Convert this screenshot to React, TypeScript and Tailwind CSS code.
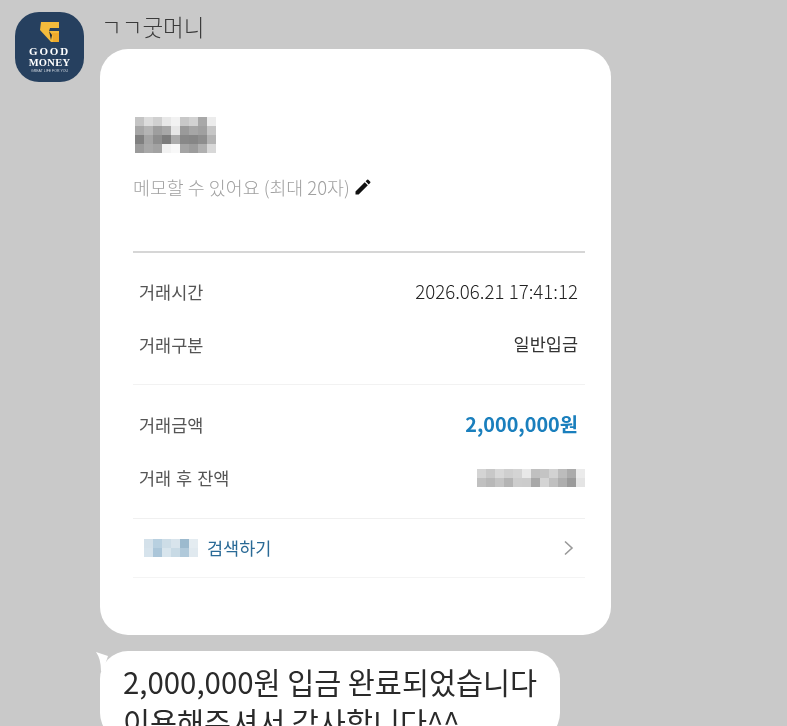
const font = "font-['Noto_Sans_CJK_KR','Noto_Sans',sans-serif]";

function Mosaic({ colors, cols }: { colors: string[]; cols: number }) {
  return (
    <div className="grid shrink-0" style={{ gridTemplateColumns: `repeat(${cols}, 9px)`, gridAutoRows: "9px" }}>
      {colors.map((c, i) => (
        <div key={i} style={{ backgroundColor: c }} />
      ))}
    </div>
  );
}

const nameMosaic = [
  "#c4c4c4", "#dcdcdc", "#d0d0d0", "#e8e8e8", "#f2f2f2", "#c8c8c8", "#d2d2d2", "#a8a8a8", "#ececec",
  "#a6a6a6", "#b4b4b4", "#9e9e9e", "#a8a8a8", "#e6e6e6", "#9a9a9a", "#a6a6a6", "#a0a0a0", "#c6c6c6",
  "#808080", "#a4a4a4", "#8e8e8e", "#7c7c7c", "#ababab", "#888888", "#868686", "#8e8e8e", "#b4b4b4",
  "#9a9a9a", "#a8a8a8", "#a2a2a2", "#f2f2f2", "#f8f8f8", "#a4a4a4", "#9c9c9c", "#b0b0b0", "#d8d8d8",
];
const balanceMosaic = [
  "#d4d4d4", "#c8c8c8", "#d8d8d8", "#cfcfcf", "#d4d4d4", "#e8e8e8", "#c0c0c0", "#c4c4c4", "#d2d2d2", "#bcbcbc", "#ababab", "#ebebeb",
  "#c0c0c0", "#b8b8b8", "#c4c4c4", "#b4b4b4", "#cdcdcd", "#cccccc", "#a8a8a8", "#d4d4d4", "#c0c0c0", "#aeaeae", "#9a9a9a", "#e4e4e4",
];
const linkMosaic = [
  "#d4e1ea", "#b8d0e0", "#cddde7", "#d8e4ec", "#9cbace", "#e4ecf1",
  "#d6e3ec", "#abc6d9", "#d8e5ed", "#c8dae5", "#b0c9da", "#e0e9ef",
];

function Row({ label, children, className }: { label: string; children: React.ReactNode; className: string }) {
  return (
    <div className={`flex h-[26px] items-center justify-between ${className}`}>
      <span className="pl-[6px] text-[17.5px] leading-[24px] text-[#555555] [word-spacing:1px]">{label}</span>
      {children}
    </div>
  );
}

function Logo() {
  return (
    <div className="flex h-[70px] w-[69px] shrink-0 flex-col items-center rounded-[24px] bg-[#26405f] pt-[10px]">
      <svg width="19" height="21" viewBox="0 0 19 21">
        <path d="M1 0H19V6H10L9 9H19V20H11L0 8Z" fill="#f4bb3c" />
        <path d="M11 11H19V20H13V14Z" fill="#eeaa2c" />
        <path d="M9 9L11 18L12 13Z" fill="#16263a" />
      </svg>
      <span className="mt-[3px] font-['Liberation_Serif',serif] text-[11px] font-bold leading-[11px] tracking-[1.8px] text-white">GOOD</span>
      <span className="font-['Liberation_Serif',serif] text-[10.5px] font-bold leading-[11px] tracking-[0.3px] text-white">MONEY</span>
      <span className="mt-[1px] font-['Liberation_Sans',sans-serif] text-[3.5px] leading-[4px] text-[#d5dbe3]">GREAT LIFE FOR YOU</span>
    </div>
  );
}

export default function App() {
  return (
    <div className={`${font} flex h-[726px] w-[787px] gap-[16px] overflow-hidden bg-[#c9c9c9] pl-[15px] pt-[12px] blur-[0.4px]`}>
      <Logo />
      <div className="flex w-[511px] shrink-0 flex-col">
        <div className="pl-[1px] text-[22.5px] font-light leading-[28px] text-[#3a3a3a]">ㄱㄱ굿머니</div>
        <div className="mt-[9px] flex h-[586px] shrink-0 flex-col rounded-[28px] bg-white pl-[33px] pr-[26px] pt-[68px]">
          <div className="pl-[2px]">
            <Mosaic colors={nameMosaic} cols={9} />
          </div>
          <div className="mt-[22px] flex items-center gap-[3px] text-[18.4px] font-light leading-[24px] text-[#a0a0a0]">
            <span>메모할 수 있어요 (최대 20자)</span>
            <svg width="20" height="20" viewBox="0 0 24 24" fill="#111111">
              <path d="M3 17.25V21h3.75L17.81 9.94l-3.75-3.75L3 17.25zM20.71 7.04a1 1 0 0 0 0-1.41l-2.34-2.34a1 1 0 0 0-1.41 0l-1.83 1.83 3.75 3.75 1.83-1.83z" />
            </svg>
          </div>
          <div className="mt-[52px] h-[2px] bg-[#d6d6d6]" />
          <Row label="거래시간" className="mt-[26px]">
            <span className="mt-[-2px] pr-[7px] text-[18.7px] font-light leading-[26px] text-[#222222]">2026.06.21 17:41:12</span>
          </Row>
          <Row label="거래구분" className="mt-[27px]">
            <span className="mt-[-2px] pr-[7px] text-[17.5px] leading-[26px] text-[#333333]">일반입금</span>
          </Row>
          <div className="mt-[26px] h-[1px] bg-[#f2f2f2]" />
          <Row label="거래금액" className="mt-[27px]">
            <span className="mt-[-2px] pr-[7px] text-[19.8px] font-bold leading-[26px] text-[#1a7fbd]">2,000,000원</span>
          </Row>
          <Row label="거래 후 잔액" className="mt-[27px]">
            <Mosaic colors={balanceMosaic} cols={12} />
          </Row>
          <div className="mt-[27px] h-[1px] bg-[#f0f0f0]" />
          <div className="flex h-[58px] items-center pl-[11px] pr-[10px]">
            <Mosaic colors={linkMosaic} cols={6} />
            <span className="ml-[9px] text-[17.5px] leading-[24px] text-[#2a6a96]">검색하기</span>
            <svg className="ml-auto" width="12" height="18" viewBox="0 0 12 18" fill="none" stroke="#999999" strokeWidth="1.6">
              <path d="M2 2.5l7 6.5-7 6.5" />
            </svg>
          </div>
          <div className="h-[1px] bg-[#f4f4f4]" />
        </div>
        <div className="relative mt-[16px] w-[460px] shrink-0 rounded-[28px] bg-white pl-[23px] pr-[20px] pt-[10px]">
          <svg className="absolute left-[-5px] top-0" width="24" height="24" viewBox="0 0 24 24" fill="#ffffff">
            <path d="M1 1L13 5L8 20L6 20Q6 8 1 1Z" />
          </svg>
          <div className="relative whitespace-nowrap text-[29.4px] leading-[40px] text-[#2a2a2a]">
            <div>2,000,000원 입금 완료되었습니다</div>
            <div>이용해주셔서 감사합니다^^</div>
          </div>
        </div>
      </div>
    </div>
  );
}
